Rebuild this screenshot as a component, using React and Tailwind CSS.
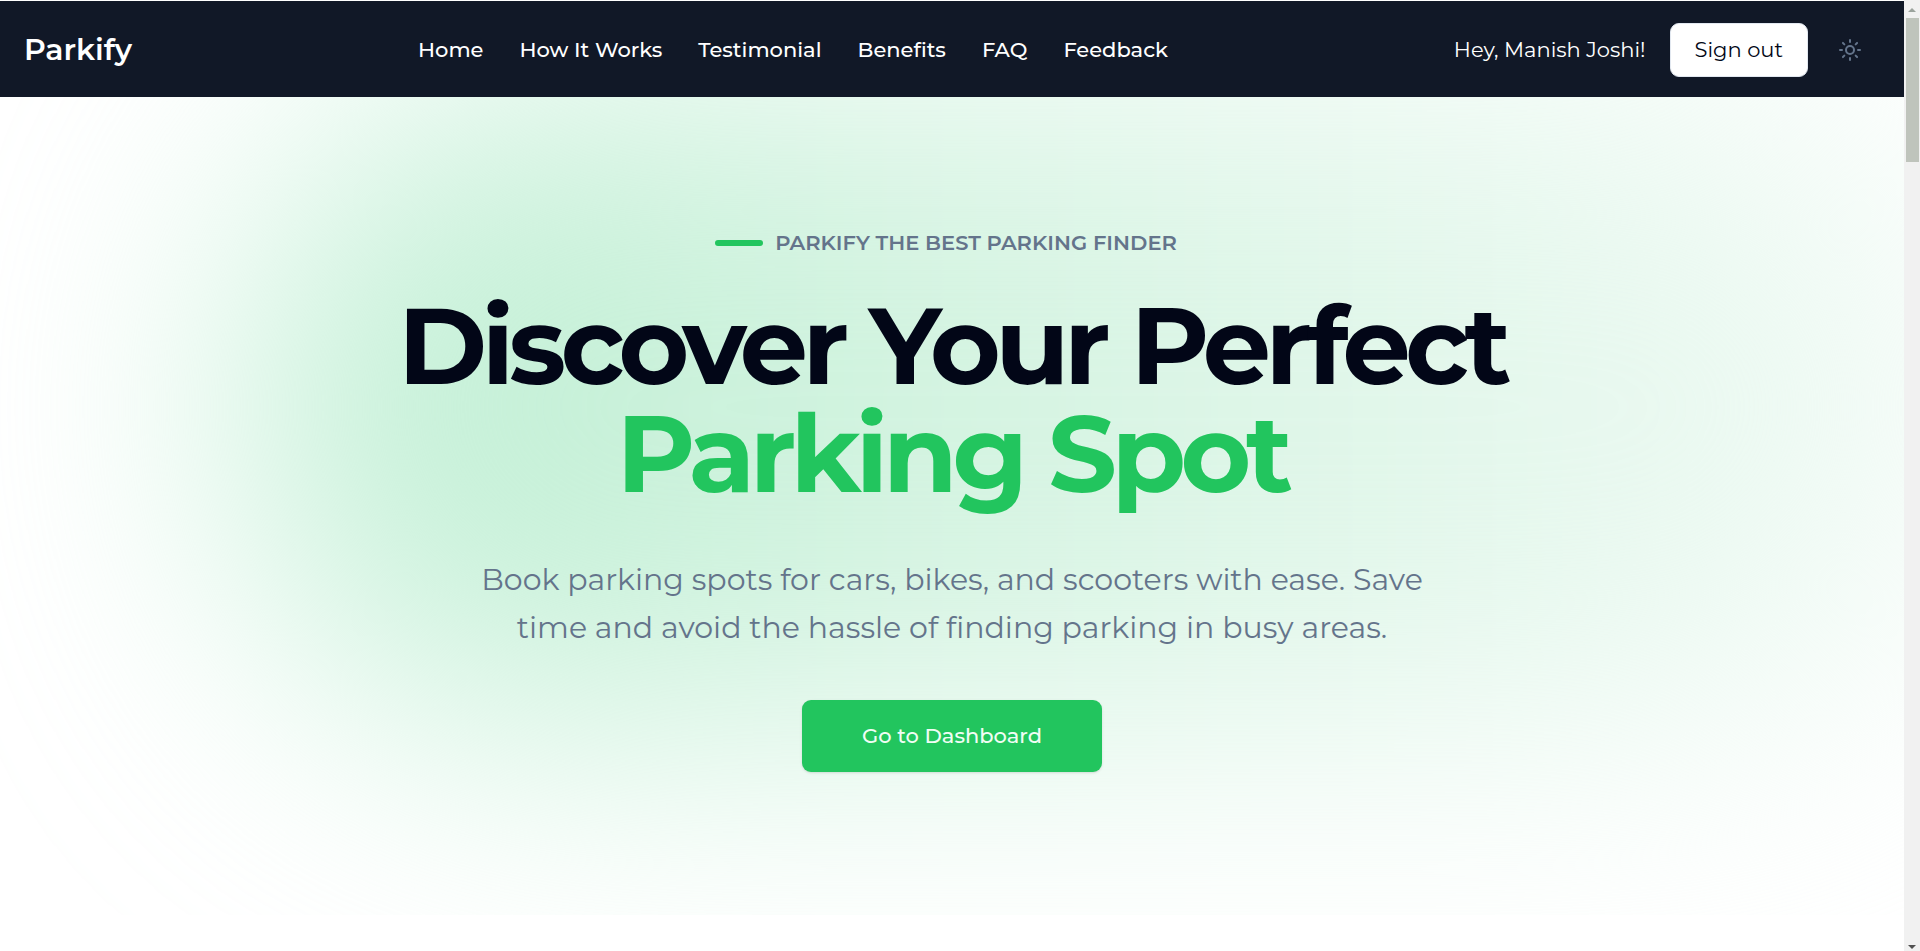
import React from 'react';
import { Sun } from 'lucide-react';

const navLinks = [
  { label: 'Home', href: '#home' },
  { label: 'How It Works', href: '#how-it-works' },
  { label: 'Testimonial', href: '#testimonial' },
  { label: 'Benefits', href: '#benefits' },
  { label: 'FAQ', href: '#faq' },
  { label: 'Feedback', href: '#feedback' },
];

const Header = () => (
  <header className="relative z-10 mt-px flex items-center justify-between bg-[#111827] px-6 pt-[22px] pb-5 text-white">
    <a href="#home" className="text-[30px] leading-9 font-semibold">
      Parkify
    </a>

    <nav className="flex items-center gap-9 text-[21px] leading-[30px] font-medium">
      {navLinks.map((link) => (
        <a key={link.href} href={link.href}>
          {link.label}
        </a>
      ))}
    </nav>

    <div className="flex items-center">
      <span className="mr-6 text-[21px] leading-[30px]">Hey, Manish Joshi!</span>
      <button
        type="button"
        className="mr-3 rounded-[9px] border border-slate-200 bg-white px-6 py-[11px] text-[21px] leading-[30px] text-[#020817]"
      >
        Sign out
      </button>
      <button
        type="button"
        aria-label="Toggle theme"
        className="flex h-12 w-15 items-center justify-center text-[#64748b]"
      >
        <Sun className="h-6 w-6" />
      </button>
    </div>
  </header>
);

const Hero = () => (
  <section className="relative flex h-[818px] flex-col items-center overflow-hidden pt-[130px] text-center">
    {/* soft green glow behind the copy */}
    <div
      aria-hidden="true"
      className="absolute -top-5 left-[13%] h-[660px] w-[92%] rounded-full bg-linear-to-r from-[#bbeed1] via-[#daf5e5] to-[#f3fbf7] blur-[140px]"
    />

    <div className="relative flex flex-col items-center">
      <p className="flex items-center gap-3 pr-3 text-[21px] leading-8 font-semibold text-[#64748b]">
        <span className="h-[6px] w-12 rounded-full bg-[#22c55e]" />
        PARKIFY THE BEST PARKING FINDER
      </p>
      <h1 className="mt-8 text-[108px] leading-[108px] font-bold tracking-tighter text-[#020617]">
        Discover Your Perfect
        <span className="block text-[#22c55e]">Parking Spot</span>
      </h1>
      <p className="mt-[49px] max-w-[1000px] text-[30px] leading-[48px] text-[#64748b]">
        Book parking spots for cars, bikes, and scooters with ease. Save time and avoid the hassle of
        finding parking in busy areas.
      </p>
      <button
        type="button"
        className="mt-12 rounded-[9px] bg-[#22c55e] px-15 py-5 text-[21px] leading-8 font-medium text-green-50 shadow-sm"
      >
        Go to Dashboard
      </button>
    </div>
  </section>
);

const ScrollBar = () => (
  <div aria-hidden="true" className="flex w-4 flex-col items-center bg-[#f1f1f1]">
    <svg className="h-[18px] w-4" viewBox="0 0 16 18" fill="#9ba39d">
      <path d="M4 12 L8 8 L12 12 Z" />
    </svg>
    <div className="h-36 w-[13px] bg-[#bfc4bc]" />
    <svg className="mt-auto h-2 w-4" viewBox="0 0 16 8" fill="#505050">
      <path d="M4 2 L12 2 L8 6 Z" />
    </svg>
  </div>
);

const App = () => (
  <div className="flex min-h-screen bg-white font-['Montserrat','Inter',sans-serif]">
    <main className="min-w-0 flex-1">
      <Header />
      <Hero />
    </main>
    <ScrollBar />
  </div>
);

export default App;
